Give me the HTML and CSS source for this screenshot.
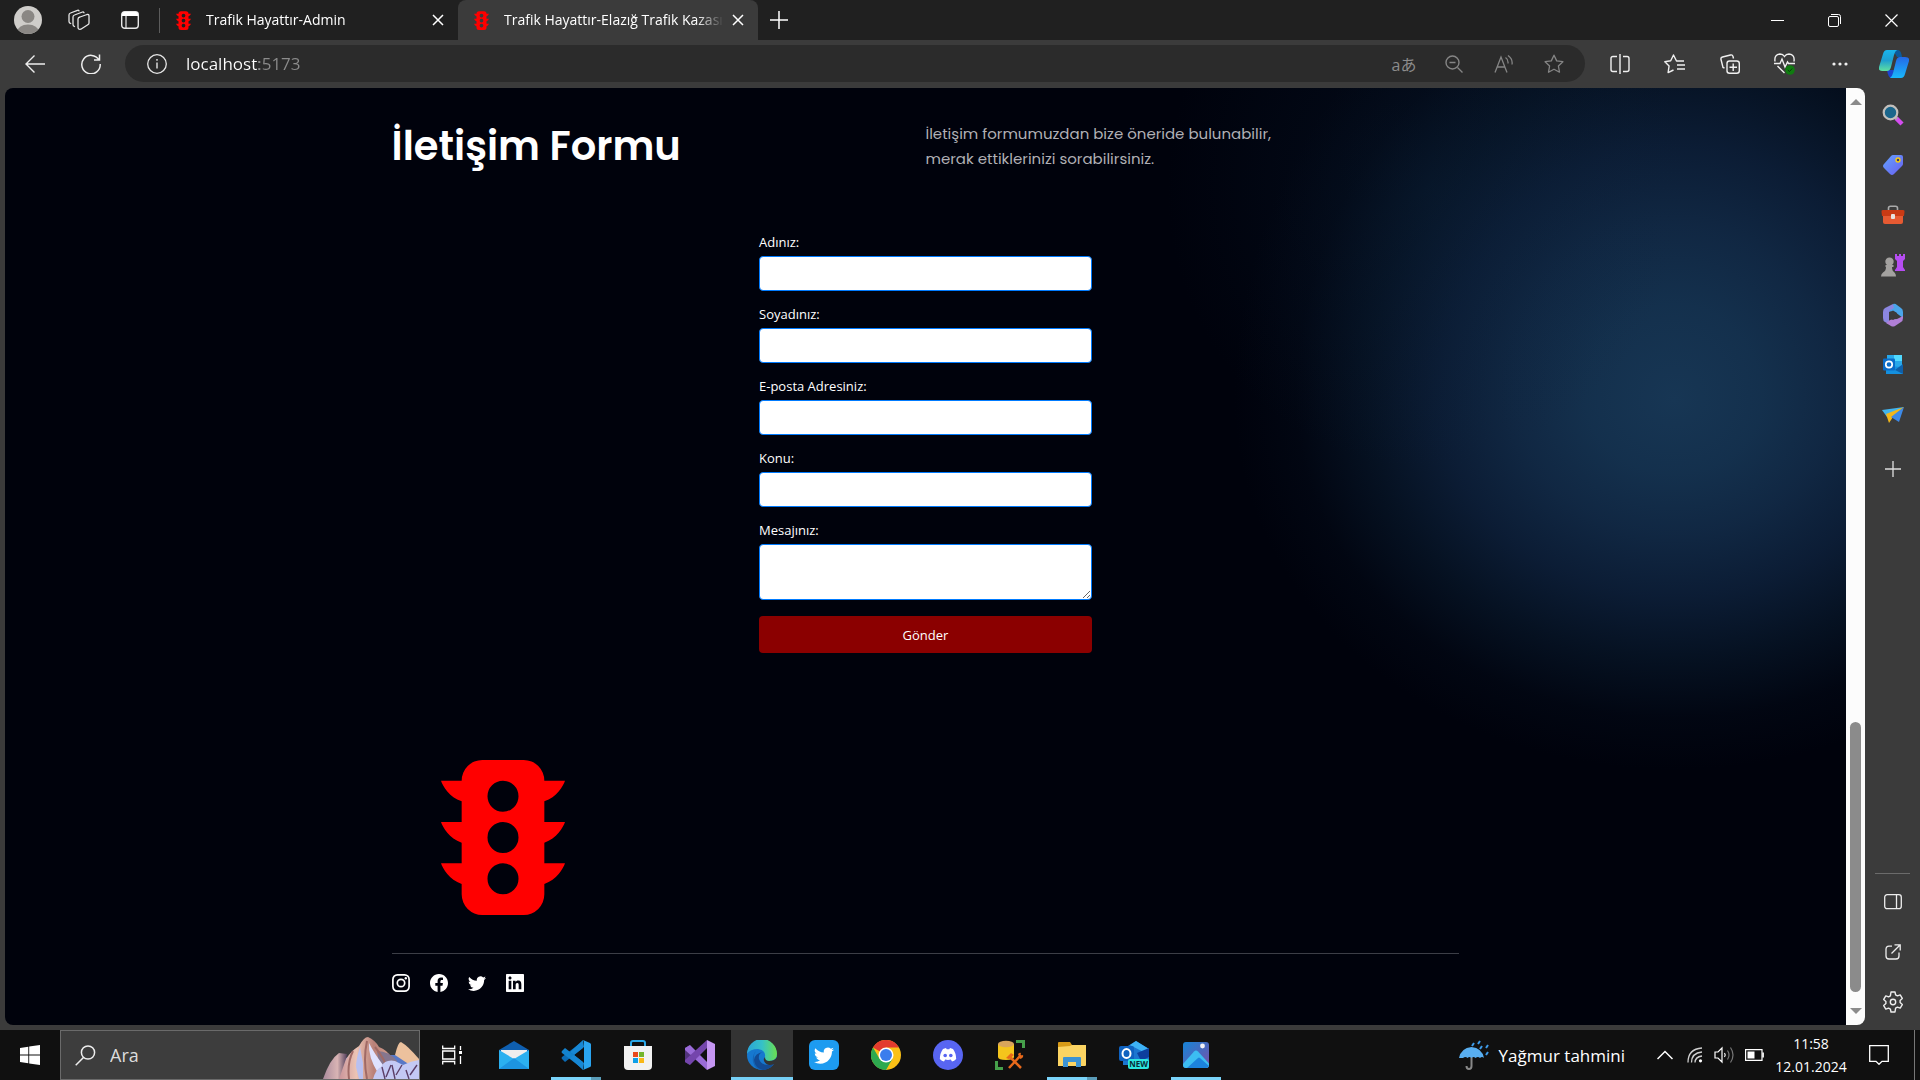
FILE: index.html
```html
<!DOCTYPE html>
<html lang="tr">
<head>
<meta charset="utf-8">
<title>Trafik Hayattır-Elazığ Trafik Kazası</title>
<link rel="stylesheet" href="styles.css">
</head>
<body>
<svg class="sprite" aria-hidden="true">
  <symbol id="light" viewBox="2 0 12 15"><path fill="currentColor" fill-rule="evenodd" d="M6 0a2 2 0 0 0-2 2H2c.167.5.8 1.6 2 2v2H2c.167.5.8 1.6 2 2v2H2c.167.5.8 1.6 2 2v1a2 2 0 0 0 2 2h4a2 2 0 0 0 2-2v-1c1.2-.4 1.833-1.5 2-2h-2V8c1.2-.4 1.833-1.5 2-2h-2V4c1.2-.4 1.833-1.5 2-2h-2a2 2 0 0 0-2-2zM9.500 3.500a1.500 1.500 0 1 1-3 0a1.500 1.500 0 0 1 3 0zM9.500 7.500a1.500 1.500 0 1 1-3 0a1.500 1.500 0 0 1 3 0zM9.500 11.500a1.500 1.500 0 1 1-3 0a1.500 1.500 0 0 1 3 0z"/></symbol>
  <symbol id="cross" viewBox="0 0 12 12"><path d="M1 1l10 10M11 1L1 11" stroke="currentColor" stroke-width="1.500" fill="none"/></symbol>
  <symbol id="plus" viewBox="0 0 18 18"><path d="M9 0v18M0 9h18" stroke="currentColor" stroke-width="1.500" fill="none"/></symbol>
  <symbol id="star" viewBox="0 0 20 20"><path d="M10 1.200l2.700 5.700 6.200.8-4.500 4.300 1.100 6.200-5.500-3-5.500 3 1.100-6.200L1.100 7.700l6.200-.8z" stroke="currentColor" stroke-width="1.300" stroke-linejoin="round" fill="none"/></symbol>
</svg>

<header class="titlebar">
  <div class="lead">
    <button class="lead-btn" aria-label="Profil"><svg width="28" height="28" viewBox="0 0 28 28"><defs><clipPath id="av"><circle cx="14" cy="14" r="14"/></clipPath></defs><g clip-path="url(#av)"><rect width="28" height="28" fill="#cfcdca"/><circle cx="14" cy="10.500" r="6.500" fill="#8a8784"/><ellipse cx="14" cy="26" rx="11" ry="7.500" fill="#8a8784"/></g></svg></button>
    <button class="lead-btn" aria-label="Çalışma alanları"><svg width="22" height="22" viewBox="0 0 22 22" fill="none" stroke="#e6e6e6" stroke-width="1.300" stroke-linejoin="round" stroke-linecap="round"><path d="M12 8l7-2.500q2-.5 2 1.500v7q0 1.200-1.200 1.700l-7 4.500q-2.800.5-2.800-2V10q0-1.500 2-2zM6.500 17.500q-1.500-.5-1.500-2V8q0-1.500 1.500-2l8-3q1-.3 1.500.7M2.700 14.500Q1 14 1 12.500V6q0-1.500 1.500-2l7-2.700q1-.4 1.500.6"/></svg></button>
    <button class="lead-btn" aria-label="Sekme eylemleri"><svg width="18" height="18" viewBox="0 0 18 18"><rect x=".7" y=".7" width="16.600" height="16.600" rx="3" fill="none" stroke="#e6e6e6" stroke-width="1.400"/><path d="M1 5V3q0-2 2-2h12q2 0 2 2v2z" fill="#fff"/><path d="M5 5v12" stroke="#e6e6e6" stroke-width="1.200"/></svg></button>
  </div>
  <nav class="tabs" aria-label="Sekmeler">
    <div class="tab">
      <svg class="favicon"><use href="#light"/></svg><span class="tab-title">Trafik Hayattır-Admin</span>
      <button class="tab-x" aria-label="Kapat"><svg width="12" height="12"><use href="#cross"/></svg></button>
    </div>
    <div class="tab active">
      <svg class="favicon"><use href="#light"/></svg><span class="tab-title">Trafik Hayattır-Elazığ Trafik Kazası</span>
      <button class="tab-x" aria-label="Kapat"><svg width="12" height="12"><use href="#cross"/></svg></button>
    </div>
    <button class="new-tab" aria-label="Yeni sekme"><svg width="18" height="18"><use href="#plus"/></svg></button>
  </nav>
  <div class="win">
    <button aria-label="Küçült"><svg width="13" height="13"><path d="M0 6.500h13" stroke="#fff"/></svg></button>
    <button aria-label="Geri yükle"><svg width="13" height="13" fill="none" stroke="#fff"><rect x=".5" y="2.500" width="10" height="10" rx="1.500"/><path d="M3 .5h7.500q2 0 2 2V10"/></svg></button>
    <button aria-label="Pencereyi kapat"><svg width="13" height="13"><path d="M.5.5l12 12M12.500.5l-12 12" stroke="#fff" stroke-width="1.200"/></svg></button>
  </div>
</header>

<div class="toolbar">
  <div class="nav-btns">
    <button aria-label="Geri"><svg width="20" height="18" viewBox="0 0 20 18" fill="none" stroke="#eee" stroke-width="1.400"><path d="M20 9H1M9.500.5L1 9l8.500 8.500"/></svg></button>
    <button aria-label="Yenile"><svg width="20" height="20" viewBox="0 0 20 20" fill="none" stroke="#eee" stroke-width="1.500"><path d="M18 6A9.200 9.200 0 1 0 19.200 10M18.500.5V6H13"/></svg></button>
  </div>
  <div class="address">
    <svg width="20" height="20" viewBox="0 0 20 20" fill="none" stroke="#e6e6e6"><circle cx="10" cy="10" r="9.300" stroke-width="1.300"/><path d="M10 8.500v6M10 5v1.800" stroke-width="1.400"/></svg>
    <input class="url" type="text" aria-label="Adres" value="localhost:5173">
    <div class="address-tools">
      <button aria-label="Çevir" class="tr-btn">aあ</button>
      <button aria-label="Uzaklaştır"><svg width="18" height="18" viewBox="0 0 18 18" fill="none" stroke="#858585" stroke-width="1.400"><circle cx="7.500" cy="7.500" r="6.500"/><path d="M12.500 12.500l5 5M4.500 7.500h6"/></svg></button>
      <button aria-label="Sesli oku"><svg width="20" height="18" viewBox="0 0 20 18" fill="none" stroke="#858585" stroke-width="1.300"><path d="M1 17.500L7 2l6 15.500M3.200 12h7.600M11.500 2.500q3 2 2.500 6M14 .5q5 3.500 4 9"/></svg></button>
      <button aria-label="Sık kullanılanlara ekle" class="dim"><svg width="20" height="20"><use href="#star"/></svg></button>
    </div>
  </div>
  <div class="actions">
    <button aria-label="Bölünmüş ekran"><svg width="20" height="20" viewBox="0 0 20 20" fill="none" stroke="#f0f0f0" stroke-width="1.400"><path d="M7 2.500H3q-2 0-2 2v11q0 2 2 2h4M13 2.500h4q2 0 2 2v11q0 2-2 2h-4M10 0v20"/></svg></button>
    <button aria-label="Sık kullanılanlar"><svg width="21" height="20" viewBox="0 0 21 20" fill="none" stroke="#f0f0f0" stroke-width="1.400" stroke-linejoin="round"><path d="M20 7h-7.500L9.500 1 6.700 6.800.8 7.700l4.300 4.200-1 6.700L9.500 16M13 11h8M13 15h8"/></svg></button>
    <button aria-label="Koleksiyonlar"><svg width="20" height="20" viewBox="0 0 20 20" fill="none" stroke="#f0f0f0" stroke-width="1.400"><rect x="7" y="7" width="12.300" height="12.300" rx="2.500"/><path d="M13.200 9.500v7.500M9.500 13.200h7.500M4.500 14L3 13.500 1 5.500q-.5-2 1.500-2.500l8-2q2-.5 2.500 1.500l.5 2"/></svg></button>
    <button aria-label="Tarayıcı temelleri"><svg width="21" height="22" viewBox="0 0 21 22" fill="none" stroke="#f0f0f0" stroke-width="1.400"><path d="M1 8.500q-1-7 5-7.500 3 0 4.500 2.500Q12 1 15 1q6 .5 5 7.500M0 10.500h6L8 6l3 8 2.500-5 1 1.500H21M3.500 13l7 7"/><circle cx="16" cy="17" r="4.800" fill="#107c10" stroke="none"/><path d="M13.800 17l1.700 1.500 2.700-3" stroke="#0a3d0a" stroke-width="1"/></svg></button>
    <button aria-label="Ayarlar ve daha fazlası"><svg width="16" height="4" fill="#f0f0f0"><circle cx="2" cy="2" r="1.600"/><circle cx="8" cy="2" r="1.600"/><circle cx="14" cy="2" r="1.600"/></svg></button>
    <button aria-label="Copilot"><svg width="30" height="28" viewBox="0 0 30 28"><defs><linearGradient id="cp1" x2="0" y2="1"><stop stop-color="#19b5ee"/><stop offset=".5" stop-color="#1f9fd0"/><stop offset="1" stop-color="#5fe0a0"/></linearGradient><linearGradient id="cp2" x2="0" y2="1"><stop stop-color="#2468e6"/><stop offset="1" stop-color="#19b8fb"/></linearGradient></defs><path d="M14 0h5q3 0 4 7h-5z" fill="#0b5a9c"/><path d="M8 20h7l-2 8h-1q-3-1-4-8z" fill="#1b45cf"/><path d="M8 0h10q-2 1-3 5l-3 12q-1 4-4 4H3q-4 0-3-4L4 4q1-4 4-4z" fill="url(#cp1)"/><path d="M22 28H11q2-1 3-5l3-12q1-4 4-4h5q5 0 4 4l-4 13q-1 4-4 4z" fill="url(#cp2)"/></svg></button>
  </div>
</div>

<div class="workspace">
  <main class="page">
    <section class="intro wrap">
      <h1>İletişim Formu</h1>
      <p>İletişim formumuzdan bize öneride bulunabilir,<br>merak ettiklerinizi sorabilirsiniz.</p>
    </section>
    <form class="contact">
      <div class="field"><label for="ad">Adınız:</label><input id="ad" type="text"></div>
      <div class="field"><label for="soyad">Soyadınız:</label><input id="soyad" type="text"></div>
      <div class="field"><label for="eposta">E-posta Adresiniz:</label><input id="eposta" type="email"></div>
      <div class="field"><label for="konu">Konu:</label><input id="konu" type="text"></div>
      <div class="field"><label for="mesaj">Mesajınız:</label><textarea id="mesaj"></textarea></div>
      <button type="button" class="send">Gönder</button>
    </form>
    <footer class="wrap foot">
      <svg class="brand" role="img" aria-label="Trafik Hayattır"><use href="#light"/></svg>
      <div class="social">
        <a href="#" aria-label="Instagram"><svg viewBox="0 0 18 18"><rect x=".9" y=".9" width="16.200" height="16.200" rx="4.500" fill="none" stroke="#fff" stroke-width="1.700"/><circle cx="9" cy="9" r="3.700" fill="none" stroke="#fff" stroke-width="1.700"/><circle cx="13.800" cy="4.200" r="1.200" fill="#fff"/></svg></a>
        <a href="#" aria-label="Facebook"><svg viewBox="0 0 16 16"><path fill="#fff" d="M16 8.049c0-4.446-3.582-8.050-8-8.050C3.580 0-.002 3.603-.002 8.050c0 4.017 2.926 7.347 6.750 7.951v-5.625h-2.030V8.050H6.750V6.275c0-2.017 1.195-3.131 3.022-3.131.876 0 1.791.157 1.791.157v1.980h-1.009c-.993 0-1.303.621-1.303 1.258v1.510h2.218l-.354 2.326H9.250V16c3.824-.604 6.750-3.934 6.750-7.951"/></svg></a>
        <a href="#" aria-label="Twitter"><svg viewBox="0 0 16 16"><path fill="#fff" d="M5.026 15c6.038 0 9.341-5.003 9.341-9.334q.002-.211-.006-.422A6.700 6.700 0 0 0 16 3.542a6.700 6.700 0 0 1-1.889.518 3.300 3.300 0 0 0 1.447-1.817 6.500 6.500 0 0 1-2.087.793A3.286 3.286 0 0 0 7.875 6.030a9.320 9.320 0 0 1-6.767-3.429 3.290 3.290 0 0 0 1.018 4.382A3.300 3.300 0 0 1 .64 6.575v.045a3.290 3.290 0 0 0 2.632 3.218 3.200 3.200 0 0 1-.865.115 3 3 0 0 1-.614-.057 3.280 3.280 0 0 0 3.067 2.277A6.600 6.600 0 0 1 .780 13.580a6 6 0 0 1-.780-.045A9.340 9.340 0 0 0 5.026 15"/></svg></a>
        <a href="#" aria-label="LinkedIn"><svg viewBox="3 3 18 18"><path fill="#fff" d="M18.336 18.339H15.670V14.162C15.670 13.166 15.650 11.884 14.281 11.884C12.892 11.884 12.679 12.968 12.679 14.088V18.339H10.014V9.750H12.574V10.920H12.609C12.967 10.245 13.837 9.533 15.136 9.533C17.837 9.533 18.337 11.310 18.337 13.624V18.339ZM7.003 8.574C6.145 8.574 5.456 7.880 5.456 7.026C5.456 6.172 6.146 5.478 7.003 5.478C7.858 5.478 8.551 6.172 8.551 7.026C8.551 7.880 7.857 8.574 7.003 8.574ZM8.340 18.339H5.667V9.750H8.340V18.339ZM20.200 3H3.800Q3 3 3 3.800V20.200Q3 21 3.800 21H20.200Q21 21 21 20.200V3.800Q21 3 20.200 3Z"/></svg></a>
      </div>
    </footer>
  </main>
  <div class="scroller" aria-hidden="true">
    <svg width="12" height="6"><path d="M0 6L6 0l6 6z" fill="#8b8b8b"/></svg>
    <div class="track"><div class="thumb"></div></div>
    <svg width="12" height="6"><path d="M0 0l6 6 6-6z" fill="#8b8b8b"/></svg>
  </div>
  <aside class="sidebar">
    <button aria-label="Arama"><svg width="22" height="22" viewBox="0 0 22 22"><path d="M14 14l6 6" stroke="#d44df0" stroke-width="4.500"/><path d="M12 12l3 3" stroke="#aaa" stroke-width="2.500"/><circle cx="8.500" cy="8.500" r="6.800" fill="#1b668c" stroke="#c2bfbc" stroke-width="2.200"/></svg></button>
    <button aria-label="Alışveriş"><svg width="22" height="22" viewBox="0 0 22 22"><defs><linearGradient id="tg" x2="1" y2="1"><stop stop-color="#62a4ff"/><stop offset="1" stop-color="#6a5df0"/></linearGradient></defs><path d="M11 1h8q2 0 2 2v7q0 1-1 2l-8 8q-2 2-4 0l-6-6q-2-2 0-4l7-8q1-1 2-1z" fill="url(#tg)"/><circle cx="16" cy="6" r="2" fill="#3b3b6b" stroke="#f7cb15" stroke-width="1.400"/></svg></button>
    <button aria-label="Araçlar"><svg width="24" height="20" viewBox="0 0 24 20"><path d="M7.500 6V3q0-1.800 2-1.800h5q2 0 2 1.800v3" fill="none" stroke="#aaa" stroke-width="1.600"/><path d="M2 9h20v8q0 2-2 2H4q-2 0-2-2z" fill="#e65a32"/><path d="M2 5h20q2 0 1.500 2l-.5 4H1L.5 7Q0 5 2 5z" fill="#c93a14"/><rect x="10" y="9" width="4" height="5" rx="1" fill="#e8e4e0"/></svg></button>
    <button aria-label="Oyunlar"><svg width="24" height="24" viewBox="0 0 24 24"><path d="M14 1h2v2h2V1h2v2h2V1h2v5l-2 2v6l2 3v1H14v-1l2-3V8l-2-2z" fill="#b64df2"/><path d="M5 14h-.500v-2h1.500a4.200 4.200 0 1 1 5 0h1.500v2H11q0 4 2.500 5.500Q15 21 15 23.500H0Q0 21 2 19.500 5 18 5 14z" fill="#a3a19f"/></svg></button>
    <button aria-label="Microsoft 365"><svg width="22" height="24" viewBox="0 0 22 24"><path d="M11 1L3 5Q1 6 1 9v6q0 3 2 4l4 2V9l8-4z" fill="#8b86e0"/><path d="M11 1q2-1 4 1l4 3q2 1 2 4v6L13 9 7 8l5-3z" fill="#4aa5ea"/><path d="M21 13v2q0 3-2 4l-6 4q-2 1-4 0l-5-3 4-3q2-1 7-1z" fill="#b07fd6"/><path d="M11 7.500l4 2.500v4.500L11 17l-4-2.500V10z" fill="#3b3b3b"/></svg></button>
    <button aria-label="Outlook"><svg width="20" height="20" viewBox="0 0 20 20"><path d="M4 0h15v14H4z" fill="#28a8ea"/><path d="M11 0h8v6h-8z" fill="#50d9ff"/><path d="M3 11l17 1v7H3z" fill="#1490df"/><path d="M20 9v10l-8-4z" fill="#0f5fa8"/><rect y="3.500" width="12" height="12" rx="1" fill="#0a6cc8"/><circle cx="6" cy="9.500" r="3.200" fill="none" stroke="#fff" stroke-width="1.700"/></svg></button>
    <button aria-label="Bırak"><svg width="22" height="16" viewBox="0 0 22 16"><path d="M0 3L22 0 5 10z" fill="#41b4ee"/><path d="M22 0L4 7l3 9 4-6z" fill="#f2b71b"/><path d="M22 0l-5 15-8-5z" fill="#3d8ae8"/></svg></button>
    <button aria-label="Özelleştir" class="muted"><svg width="16" height="16"><use href="#plus"/></svg></button>
    <div class="sidebar-end">
      <button aria-label="Kenar çubuğu"><svg width="18" height="16" fill="none" stroke="#eee" stroke-width="1.300"><rect x=".7" y=".7" width="16.600" height="14" rx="2.500"/><path d="M12.500.7v14"/></svg></button>
      <button aria-label="Yeni pencerede aç"><svg width="16" height="16" fill="none" stroke="#eee" stroke-width="1.300"><path d="M7 2.200H4q-3 0-3 3V12q0 3 3 3h7q3 0 3-3V8.500M9.500.8h5.700v5.700M15 1L6.500 9.500"/></svg></button>
      <button aria-label="Ayarlar"><svg width="22" height="22" viewBox="0 0 22 22" fill="none" stroke="#eee" stroke-width="1.400" stroke-linejoin="round"><path d="M9 1h4l.6 2.900 1.800 1 2.800-1 2.100 3.500-2.200 2v2.200l2.200 2-2.100 3.500-2.800-1-1.800 1L13 21H9l-.6-2.900-1.800-1-2.800 1-2.100-3.500 2.200-2v-2.200l-2.200-2 2.100-3.500 2.800 1 1.800-1z"/><circle cx="11" cy="11" r="2.700"/></svg></button>
    </div>
  </aside>
</div>

<footer class="taskbar">
  <button class="start" aria-label="Başlat"><svg width="20" height="20" viewBox="0 0 20 20" fill="#fff"><path d="M0 3l8.300-1.200v7.700H0zM9.200 1.600L20 0v9.500H9.200zM0 10.400h8.300v7.800L0 17zM9.200 10.400H20V20L9.200 18.400z"/></svg></button>
  <label class="find">
    <svg width="21" height="21" viewBox="0 0 21 21" fill="none" stroke="#eee" stroke-width="1.500"><circle cx="13" cy="7.500" r="6.600"/><path d="M8.500 12.500L.7 20.300"/></svg>
    <input type="text" placeholder="Ara" aria-label="Ara">
    <svg class="hills" width="96" height="42" viewBox="0 0 96 42"><defs><linearGradient id="hl"><stop stop-color="#c9949a"/><stop offset=".3" stop-color="#ecc4b4"/><stop offset=".6" stop-color="#b98078"/><stop offset="1" stop-color="#dfae96"/></linearGradient><linearGradient id="hd"><stop stop-color="#a98a9c"/><stop offset=".6" stop-color="#d9b4b4"/><stop offset="1" stop-color="#54405c"/></linearGradient></defs><path d="M18 24q12-8 22-6l40 0 16 4v20H18z" fill="#5878c6"/><path d="M0 42q7-20 16-26l8 1-5 25z" fill="url(#hd)"/><path d="M16 42l7-20q5-8 13-13 5-9 9-9 7 3 11 10 8 3 12 10l6 22z" fill="url(#hl)"/><path d="M54 14q12 0 20 10l-4 18H58z" fill="#85768e"/><path d="M72 18q3-13 6-13 7 4 18 17v12z" fill="#ecc19d"/><path d="M37 10q-4 12-4 20l3 12h4V26z" fill="#b9c0f0"/><path d="M46 6q5 10 14 22l-5 8Q45 20 46 6z" fill="#dfe2ff"/><path d="M30 14q-6 12-4 28M44 4q-4 18 0 38M52 10q10 12 14 26" stroke="#a06a66" stroke-width="2" fill="none"/><path d="M50 42q3-10 8-12 4-8 14-6l8 4q8-4 16-5v19z" fill="#c3c9f4"/><path d="M62 42l-3-12M63 40l5-12M72 42l-3-14M73 38l6-10M86 42l-3-9M87 38l7-10" stroke="#5b3f68" stroke-width="1.400"/></svg>
  </label>
  <nav class="apps" aria-label="Uygulamalar">
    <button aria-label="Görev görünümü"><svg width="20" height="20" viewBox="0 0 20 20" fill="none" stroke="#fff" stroke-width="1.300"><path d="M.7.5v3h12v-3M.7 19.500v-3h12v3M.7 6h12v8H.7zM18.500 1v4M18.500 11v8"/><path d="M17 6h3v3h-3z" fill="#fff" stroke="none"/></svg></button>
    <button aria-label="Posta"><svg width="30" height="28" viewBox="0 0 30 28"><path d="M0 9L15 0l15 9v6H0z" fill="#0f5fb0"/><path d="M2 9h26v9H2z" fill="#eee"/><path d="M0 9l15 9 15-9v19H0z" fill="#2bb0f0"/><path d="M0 28L15 17l15 11z" fill="#1d94e0"/></svg></button>
    <button aria-label="Visual Studio Code" class="run"><svg width="30" height="30" viewBox="0 0 30 30"><path d="M22 1v7L4 22l-3-3q-1-1 0-2z" fill="#0a6bb5"/><path d="M22 29v-7L4 8l-3 3q-1 1 0 2z" fill="#1383cf"/><path d="M22 0l7 3q1 .5 1 1.500v21q0 1-1 1.500l-7 3q1-1 1-3V3q0-2-1-3z" fill="#2aa4f0"/><path d="M22 0L9 12l4 3 10-8zM22 30L9 18l4-3 10 8z" fill="#1787d4"/></svg></button>
    <button aria-label="Microsoft Store"><svg width="30" height="30" viewBox="0 0 30 30"><path d="M8 10V3q0-2 2-2h10q2 0 2 2v7" fill="none" stroke="#2aa8e8" stroke-width="2"/><path d="M1 6h28v20q0 4-4 4H5q-4 0-4-4z" fill="#f2f2f2"/><path d="M10 12h5v5h-5z" fill="#e8491d"/><path d="M16 12h5v5h-5z" fill="#74b52b"/><path d="M10 18h5v5h-5z" fill="#0d9fe8"/><path d="M16 18h5v5h-5z" fill="#f9b817"/></svg></button>
    <button aria-label="Visual Studio"><svg width="30" height="30" viewBox="0 0 30 30"><path d="M0 8l5-3v20l-5-3z" fill="#52337d"/><path d="M5 5l17 17v8L0 10V8z" fill="#9a6bd8"/><path d="M5 25L22 8V0L0 20v2z" fill="#7445ac"/><path d="M22 0l8 4v22l-8 4z" fill="#c596f2"/></svg></button>
    <button aria-label="Microsoft Edge" class="current"><svg width="30" height="30" viewBox="0 0 30 30"><defs><linearGradient id="e1" x2="1"><stop stop-color="#2aa5d8"/><stop offset=".5" stop-color="#35c1c8"/><stop offset="1" stop-color="#6be04e"/></linearGradient></defs><circle cx="15" cy="15" r="15" fill="#1678cf"/><path d="M0 14A15 15 0 0 1 30 14q0 7-8 7-5 0-4-4 1-7-7-8Q3 9 0 14z" fill="url(#e1)"/><path d="M9 11q-4 5 0 12 5 8 14 4-4 3-8 3-7 0-9-8-1-7 3-11z" fill="#1464b4"/><path d="M16 12q-5 1-4 7 2 6 9 6 5 0 7-3-5 8-12 8-8-2-9-10 1-7 9-8z" fill="#124b94"/><path d="M30 17v7h-3q-7 3-10-3-1-2 1-4 0 4 4 4 6 0 8-4z" fill="#333"/></svg></button>
    <button aria-label="Twitter"><svg width="30" height="30" viewBox="0 0 30 30"><rect width="30" height="30" rx="6" fill="#1d9bf0"/><path transform="translate(5 5) scale(1.250)" fill="#fff" d="M5.026 15c6.038 0 9.341-5.003 9.341-9.334q.002-.211-.006-.422A6.700 6.700 0 0 0 16 3.542a6.700 6.700 0 0 1-1.889.518 3.300 3.300 0 0 0 1.447-1.817 6.500 6.500 0 0 1-2.087.793A3.286 3.286 0 0 0 7.875 6.030a9.320 9.320 0 0 1-6.767-3.429 3.290 3.290 0 0 0 1.018 4.382A3.300 3.300 0 0 1 .64 6.575v.045a3.290 3.290 0 0 0 2.632 3.218 3.200 3.200 0 0 1-1.479.058 3.280 3.280 0 0 0 3.067 2.277A6.600 6.600 0 0 1 0 13.535 9.340 9.340 0 0 0 5.026 15"/></svg></button>
    <button aria-label="Google Chrome"><svg width="30" height="30" viewBox="0 0 30 30"><circle cx="15" cy="15" r="15" fill="#fbc116"/><path d="M15 15L2 7.500A15 15 0 0 1 28 7.500H15z" fill="#e33b2e"/><path d="M2 7.500A15 15 0 0 0 15 30l6.500-11.200L15 15 8.500 18.800z" fill="#2da94f"/><circle cx="15" cy="15" r="7.500" fill="#fff"/><circle cx="15" cy="15" r="6" fill="#3b7ded"/></svg></button>
    <button aria-label="Discord"><svg width="30" height="30" viewBox="0 0 30 30"><circle cx="15" cy="15" r="15" fill="#5865f2"/><path d="M10 9l3-1 .7 1.300h2.600L17 8l3 1q3 4 3.200 10-2 2-4.200 2.500l-1.200-2q-2.800.8-5.600 0l-1.200 2Q8.800 21 6.800 19 7 13 10 9z" fill="#fff"/><circle cx="12.200" cy="15.500" r="1.800" fill="#5865f2"/><circle cx="17.800" cy="15.500" r="1.800" fill="#5865f2"/></svg></button>
    <button aria-label="Veritabanı aracı"><svg width="30" height="30" viewBox="0 0 30 30"><path d="M3 4v13q0 3 8 3t8-3V4z" fill="#f4c51c"/><ellipse cx="11" cy="4" rx="8" ry="3.300" fill="#d9a55b"/><path d="M21 1.500h7.500V8M1.500 21v7.500H8" fill="none" stroke="#46a04b" stroke-width="3"/><path d="M14 28l12-13M14 16l12 12" stroke="#e8691b" stroke-width="2.500"/><path d="M11 18l5-5 3 2-5 4zM23 14q2-2 3-1l-1 3 3-1q1 3-3 4z" fill="#e8691b"/></svg></button>
    <button aria-label="Dosya Gezgini" class="run"><svg width="28" height="26" viewBox="0 0 28 26"><path d="M0 1q0-1 1-1h11l2 3v4H0z" fill="#d89b18"/><path d="M0 5l12-1 2-1h14v20q0 1-1 1H0z" fill="#fbd463"/><path d="M5 25V16q0-1 1-1h16q1 0 1 1v9h-5v-5h-8v5z" fill="#3d93d3"/></svg></button>
    <button aria-label="Outlook"><svg width="30" height="28" viewBox="0 0 30 28"><path d="M4 8L17 0l13 8v14q0 2-2 2H4z" fill="#1c76d0"/><path d="M17 0l13 8v6L11 4z" fill="#3db2f5"/><path d="M18 12l12-5v9l-8 4z" fill="#0d3f9d"/><rect y="5" width="15" height="15" rx="2" fill="#0f62c0"/><ellipse cx="7.500" cy="12.500" rx="4" ry="4.500" fill="none" stroke="#fff" stroke-width="2"/><rect x="9" y="18" width="21" height="10" rx="2" fill="#2ce5e0"/><text class="new" x="19.500" y="26" text-anchor="middle">NEW</text></svg></button>
    <button aria-label="Fotoğraflar" class="run full"><svg width="26" height="26" viewBox="0 0 26 26"><defs><linearGradient id="ph" x2="1" y2="1"><stop stop-color="#1585d8"/><stop offset="1" stop-color="#7a4fa8"/></linearGradient></defs><rect width="26" height="26" rx="3" fill="url(#ph)"/><path d="M0 22L11 9.500q2-2 4 0l11 12V23q0 3-3 3H3q-3 0-3-3z" fill="#3cbdf2"/><path d="M4 26l11-10q1-1 2 0l9 8q-1 2-3 2z" fill="#1c83dd"/><circle cx="19.500" cy="4" r="2.400" fill="#f3f3f8"/></svg></button>
  </nav>
  <div class="tray">
    <button class="weather"><svg width="30" height="30" viewBox="0 0 30 30"><path d="M12.500 14v12q0 3-2.500 3t-2.500-3" fill="none" stroke="#888" stroke-width="2"/><path d="M0 18Q2 8 12.500 7 23 8 25 18q-2-2-4 0-2-2-4.500 0-2-2-4 0-2-2-4 0-2-2-4.500 0z" fill="#58aef0"/><path d="M15 3l-2 3M21 1l-2 3M23 6l-2 3M29 5l-2 3M29 12l-2 3" stroke="#3d9be8" stroke-width="2"/></svg>Yağmur tahmini</button>
    <button aria-label="Gizli simgeler" class="chev"><svg width="16" height="10" fill="none" stroke="#fff" stroke-width="1.500"><path d="M.5 9L8 1.500 15.500 9"/></svg></button>
    <button aria-label="Ağ"><svg width="16" height="16" fill="none" stroke="#d0d0d0" stroke-width="1.300"><path d="M1 15.500Q1 2 15 1M4.500 15.500Q4.500 6 15 5M8 15.500Q8 10 15 9"/><circle cx="13.500" cy="13.800" r="1.600" fill="#fff" stroke="none"/></svg></button>
    <button aria-label="Ses"><svg width="21" height="18" fill="none" stroke="#fff" stroke-width="1.200"><path d="M1 6h3l4-4v14l-4-4H1zM10.500 7q1.500 2 0 4"/><path d="M13.500 4.500q3 4.500 0 9M16.500 1.500q5 7.500 0 15" stroke="#777"/></svg></button>
    <button aria-label="Pil"><svg width="19" height="12" fill="none" stroke="#fff" stroke-width="1.200"><path d="M.6.600h16.400v10.800H.6zM18.300 3.500v5"/><path d="M2.500 2.500h7v7h-7z" fill="#fff" stroke="none"/></svg></button>
    <button class="clock"><time>11:58</time><time>12.01.2024</time></button>
    <button aria-label="Bildirimler" class="note"><svg width="20" height="20" fill="none" stroke="#fff" stroke-width="1.300"><path d="M.7.7h18.600v15.600H13l-3 3-3-3H.7z"/></svg></button>
  </div>
</footer>
</body>
</html>
```
FILE: styles.css
```css
*{box-sizing:border-box}
body{margin:0;min-height:100vh;display:flex;flex-direction:column;background:#3b3b3b;color:#fff;font-family:"Segoe UI","Open Sans","Noto Sans",sans-serif;font-size:13px}
button{margin:0;padding:0;border:0;background:none;color:inherit;font:inherit;display:flex;align-items:center;justify-content:center}
svg{display:block;flex:none}
.sprite{position:absolute;width:0;height:0}

/* Title bar */
.titlebar{display:flex;height:40px;background:#202020}
.lead{display:flex;align-items:center;padding-left:2px;width:160px;position:relative}
.lead::after{content:"";position:absolute;right:0;top:8px;width:1px;height:25px;background:#5c5c5c}
.lead-btn{width:51px;height:40px}
.tabs{display:flex;flex:1;min-width:0}
.tab{display:flex;align-items:center;width:300px;padding:0 14px 0 16px;font-size:14px}
.tab:first-child{width:298px}
.active{background:#3b3b3b;border-radius:8px 8px 0 0}
.favicon{width:15px;height:19px;margin-right:15px;color:red}
.tab-title{flex:1;min-width:0;margin-right:8px;line-height:20px;white-space:nowrap;overflow:hidden;mask-image:linear-gradient(90deg,#000 calc(100% - 28px),transparent)}
.tab-x{width:12px}
.new-tab{width:42px}
.win{display:flex}
.win button{width:57px}

/* Toolbar */
.toolbar{display:flex;align-items:center;height:48px;padding-bottom:1px}
.nav-btns{display:flex;width:125px;padding-left:7px}
.nav-btns button{width:56px;height:36px}
.address{flex:1;display:flex;align-items:center;height:37px;border-radius:19px;background:#2b2b2b;padding:0 6px 0 22px}
.url{flex:1;min-width:0;margin-left:19px;border:0;padding:0;font:17px "Segoe UI","Open Sans",sans-serif;color:transparent;background:linear-gradient(90deg,#fff 73px,#8c8c8c 73px);-webkit-background-clip:text;background-clip:text}
.address-tools{display:flex}
.address-tools button{width:50px;height:36px}
.address-tools .tr-btn{font:16px "Segoe UI","Open Sans","Noto Sans CJK JP",sans-serif;color:#8c8c8c}
.dim{color:#858585}
.muted{color:#ddd}
.actions{display:flex;padding-left:7px}
.actions button{width:55px;height:36px}
.actions button:last-child{width:53px}

/* Page frame */
.workspace{flex:1;display:flex;padding:0 0 5px 5px}
.page{flex:1;min-width:0;padding-top:31px;border-radius:8px 0 0 8px;background-color:#00020c;
  --glow:rgba(23,54,84,1) 0%,rgba(21,51,81,.94) 20%,rgba(19,45,75,.87) 36%,rgba(17,41,72,.68) 53%,rgba(14,40,66,.4) 70%,rgba(12,34,58,.13) 86%,rgba(8,28,50,0) 100%;
  background-image:radial-gradient(ellipse 260px 280px at calc(100% - 420px) 100px,rgba(12,36,62,.3),transparent),radial-gradient(ellipse 440px 480px at calc(100% - 172px) 100%,var(--glow)),radial-gradient(ellipse 440px 370px at calc(100% - 172px) 0,var(--glow));
  background-size:100% 100%,100% 312px,100% 500px;background-position:0 0,0 0,0 312px;background-repeat:no-repeat}
.wrap{width:58%;margin:0 auto}
.intro{display:grid;grid-template-columns:1fr 1fr;font-family:Poppins,"Inter",sans-serif}
.intro h1{margin:0;font-size:40px;line-height:55px;font-weight:600}
.intro p{margin:2px 0 0;font-size:15px;line-height:25px;color:#b0b0b5}
.contact{width:333px;margin:60px auto 0}
.field{margin-bottom:15px}
.field label{display:block;line-height:16px;margin-bottom:6px;font-size:13px}
.field input,.field textarea{display:block;width:100%;height:35px;padding:8px;border:1px solid #007bff;border-radius:4px;background:#fff;font:inherit}
.field textarea{height:56px;resize:vertical}
.send{width:100%;height:37px;margin-top:16px;border-radius:4px;background:#8b0000}
.foot{padding-top:106px}
.brand{width:124px;height:157px;margin-left:49px;color:red}
.social{display:flex;gap:20px;margin-top:37px;padding:20px 0 33px;border-top:1px solid #3c3e47}
.social svg{width:18px;height:18px}

/* Scrollbar */
.scroller{width:19px;display:flex;flex-direction:column;align-items:center;padding:11px 0;background:#fcfcfc;border-radius:0 8px 8px 0}
.track{flex:1;display:flex;align-items:flex-end;padding:16px 0}
.thumb{width:11px;height:31%;border-radius:6px;background:#8b8b8b}

/* Sidebar */
.sidebar{width:55px;display:flex;flex-direction:column;align-items:center;padding-top:2px;margin-bottom:-2px}
.sidebar button{width:40px;height:50px}
.sidebar .muted{margin-top:4px}
.sidebar-end{margin-top:auto;border-top:1px solid #6b6b6b;padding-top:3px}
.sidebar-end button{width:35px}

/* Taskbar */
.taskbar{display:flex;height:50px;background:#101010}
.start{width:60px}
.find{display:flex;align-items:center;width:360px;padding-left:14px;border:1px solid #6a6a6a;background:#3d3d3d}
.find input{flex:1;min-width:0;margin-left:14px;padding:0;border:0;background:none;color:#fff;font:18px "Segoe UI","Open Sans",sans-serif}
.find input::placeholder{color:#dcdcdc;opacity:1}
.hills{align-self:flex-end}
.apps{display:flex;flex:1}
.apps button{width:62px;position:relative}
.apps button:first-child{width:63px}
.current{background:#333;box-shadow:inset 0 -3px #76d0f7}
.run::after{content:"";position:absolute;left:6px;right:6px;bottom:0;height:3px;background:linear-gradient(90deg,#7ad4fa 40px,#5a9cb8 40px)}
.full::after{background:#7ad4fa}
.new{font:bold 8px "Open Sans",sans-serif;fill:#082c38}
.tray{display:flex;align-items:center;padding-right:5px}
.tray button{height:50px;width:30px}
.tray .weather{width:auto;gap:10px;font-size:17px}
.tray .chev{width:32px;margin-left:24px}
.tray .chev+button{width:28px}
.tray .clock{width:80px;margin-left:2px;flex-direction:column;font-size:14px;line-height:23px}
.tray .note{width:64px;border-right:1px solid #777;padding-right:8px}
```
